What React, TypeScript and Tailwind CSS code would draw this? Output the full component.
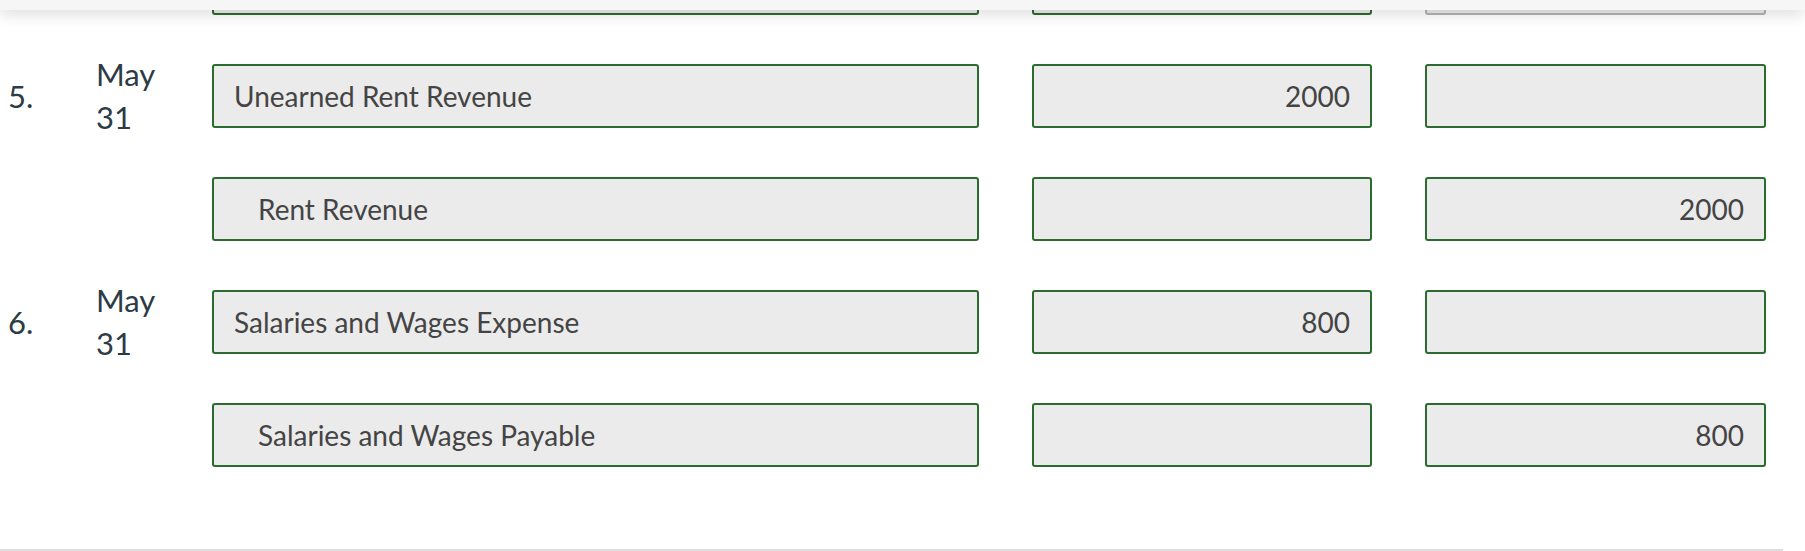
import React from 'react';

type Line = {
  num?: string;
  date?: boolean;
  account: string;
  indent?: boolean;
  debit?: string;
  credit?: string;
};

const lines: Line[] = [
  { account: '', indent: true },
  { num: '5.', date: true, account: 'Unearned Rent Revenue', debit: '2000' },
  { account: 'Rent Revenue', indent: true, credit: '2000' },
  { num: '6.', date: true, account: 'Salaries and Wages Expense', debit: '800' },
  { account: 'Salaries and Wages Payable', indent: true, credit: '800' },
];

function Field({ value, width, right, indent, muted }: { value?: string; width: string; right?: boolean; indent?: boolean; muted?: boolean }) {
  return (
    <div
      className={`${width} h-[64px] shrink-0 flex items-center rounded-[3px] border-2 bg-[#ebebeb] text-[28px] text-[#444444] ${
        muted ? 'border-[#b3b3b3]' : 'border-[#2c6b2f]'
      } ${right ? 'justify-end pr-[20px]' : indent ? 'pl-[44px]' : 'pl-[20px]'}`}
    >
      {value}
    </div>
  );
}

export default function App() {
  return (
    <div className="relative w-[1805px] h-[551px] overflow-hidden bg-white font-['Lato','Liberation_Sans',sans-serif]">
      <div className="absolute top-0 left-0 right-0 h-[10px] bg-[#f6f6f6] shadow-[0_4px_14px_rgba(0,0,0,0.16)] z-10" />
      <div className="flex flex-col gap-[49px] mt-[-49px]">
        {lines.map((l, i) => (
          <div key={i} className="flex items-center h-[64px] pl-[8px]">
            <div className="w-[88px] shrink-0 text-[31px] text-[#2d3b45]">{l.num}</div>
            <div className="w-[116px] shrink-0 text-[31px] leading-[43px] text-[#2d3b45]">
              {l.date && (
                <>
                  <div>May</div>
                  <div>31</div>
                </>
              )}
            </div>
            <Field width="w-[767px]" value={l.account} indent={l.indent} />
            <div className="w-[53px] shrink-0" />
            <Field width="w-[340px]" value={l.debit} right />
            <div className="w-[53px] shrink-0" />
            <Field width="w-[341px]" value={l.credit} right muted={i === 0} />
          </div>
        ))}
      </div>
      <div className="mt-[82px] w-[1783px] border-t-2 border-[#dddddd]" />
    </div>
  );
}
